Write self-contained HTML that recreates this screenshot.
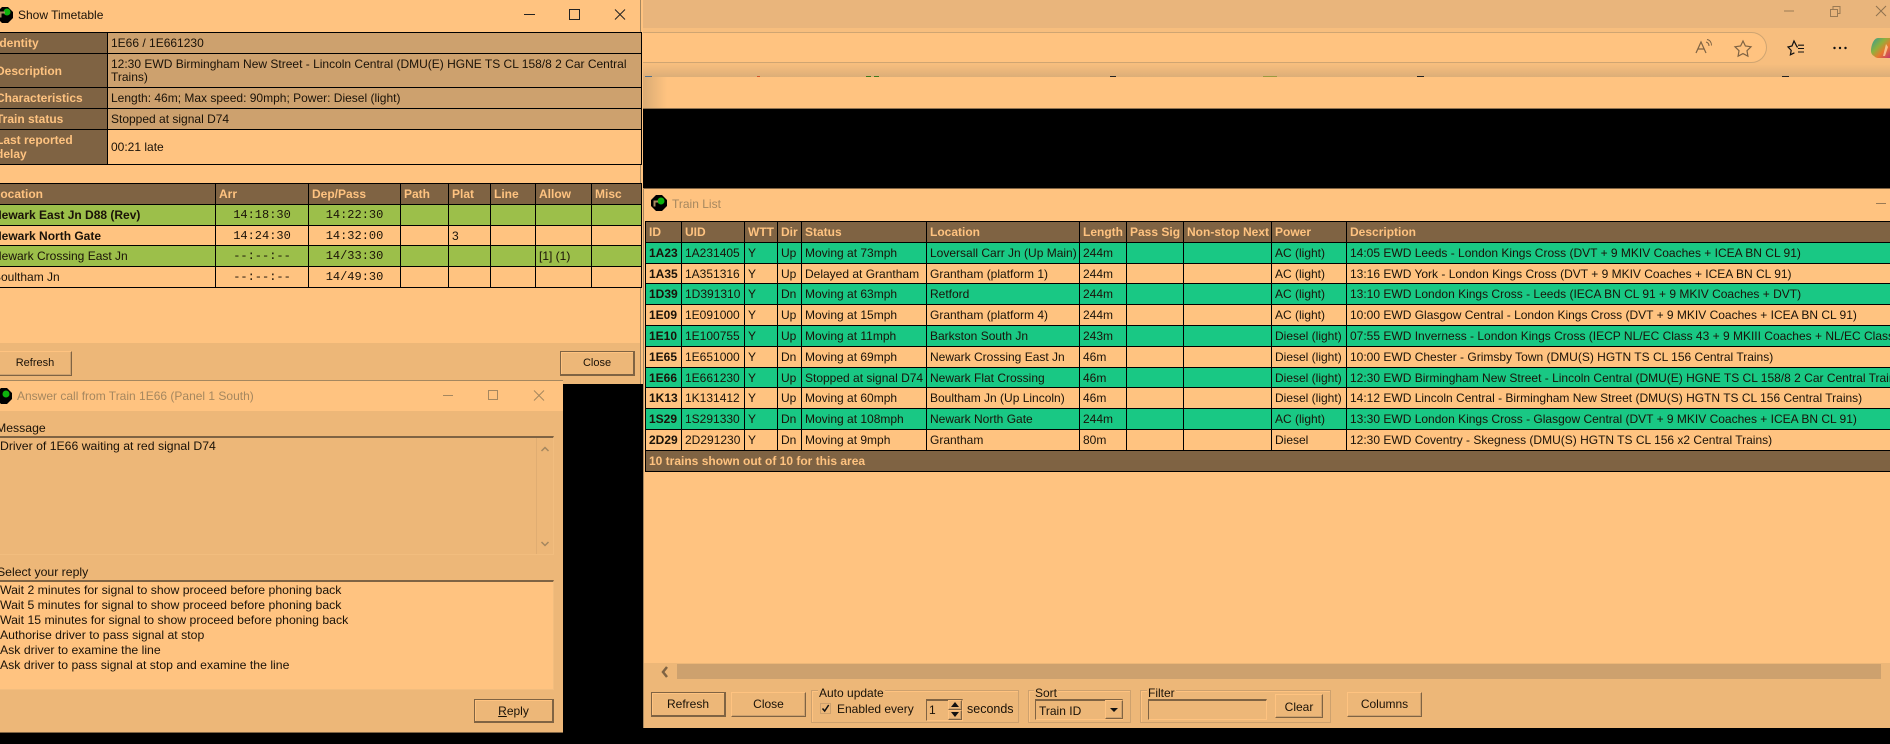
<!DOCTYPE html>
<html><head><meta charset="utf-8"><title>Train List</title>
<style>
html,body{margin:0;padding:0;background:#000;width:1890px;height:744px;overflow:hidden}
body{position:relative;font:12px/14px "Liberation Sans",Arial,sans-serif;color:#1a1208}
.a{position:absolute}
.t{position:absolute;white-space:nowrap;line-height:14px}
table{position:absolute;border-collapse:collapse;table-layout:fixed;font-size:12px;line-height:14px}
td,th{border:1px solid #000;padding:0 0 0 3px;white-space:nowrap;overflow:hidden;text-align:left;font-weight:normal;vertical-align:middle}
th,.h td{background:#7f6343;color:#ffc380;font-weight:bold}
.g td{background:#19c884}
.o td{background:#ffc380}
.lg td{background:#9cbf4a}
b{font-weight:bold}
.m{font-family:"Liberation Mono",monospace;text-align:center;padding:0}
.wrap{white-space:normal}
.btn{position:absolute;background:#edb778;box-sizing:border-box;border:1px solid;border-color:#ffc380 #7f6343 #7f6343 #ffc380;box-shadow:inset -1px -1px 0 #cda16e;text-align:center;color:#1a1208}
.def{border:2px solid #7f6343;border-top-width:1px;border-left-width:1px;box-shadow:inset 1px 1px 0 #ffc380}
.grp{position:absolute;box-sizing:border-box;border:1px solid #cda16e;box-shadow:1px 1px 0 #ffc380 inset}
.sunk{position:absolute;box-sizing:border-box;border:1px solid;border-color:#7f6343 #ffc380 #ffc380 #7f6343;border-top-width:2px;border-left-width:1px}
svg{position:absolute;overflow:visible}
.dlg .t{font-size:12.25px}
</style></head><body>

<!-- browser behind -->
<div class="a" style="left:643px;top:0;width:1247px;height:28px;background:#e9b57c"></div>
<div class="a" style="left:643px;top:28px;width:1247px;height:49px;background:linear-gradient(#f7be7e 0,#f7be7e 74%,#dcae78 100%)"></div>
<div class="a" style="left:643px;top:32px;width:1124px;height:31px;box-sizing:border-box;background:#ffc380;border:1px solid #cfa572;border-left:0;border-radius:0 16px 16px 0"></div>
<div class="a" style="left:643px;top:77px;width:1247px;height:31px;background:#ffc380"></div>
<div class="a" style="left:643px;top:77px;width:24px;height:31px;background:linear-gradient(90deg,#d9ab74,#ffc380)"></div>
<div class="a" style="left:643px;top:108px;width:1247px;height:1px;background:#8f7250"></div>
<div class="a" style="left:645px;top:76px;width:7px;height:1px;background:#53708a"></div>
<div class="a" style="left:757px;top:76px;width:3px;height:1px;background:#d4552a"></div>
<div class="a" style="left:866px;top:76px;width:5px;height:1px;background:#3f7a1e"></div>
<div class="a" style="left:874px;top:76px;width:5px;height:1px;background:#3f7a1e"></div>
<div class="a" style="left:1110px;top:76px;width:6px;height:1px;background:#222"></div>
<div class="a" style="left:1263px;top:76px;width:14px;height:1px;background:#9a9a40"></div>
<div class="a" style="left:1417px;top:76px;width:7px;height:1px;background:#222"></div>
<div class="a" style="left:1782px;top:76px;width:7px;height:1px;background:#222"></div>

<svg style="left:0;top:0" width="1890" height="80">
<path d="M1784 11h10" stroke="#9a7a54" stroke-width="1" fill="none"/>
<path d="M1830.500 9.500h7v7h-7zM1833 9V6.500h7v7h-2.500" stroke="#9a7a54" stroke-width="1" fill="none"/>
<path d="M1876 6l10 10M1886 6l-10 10" stroke="#8f7250" stroke-width="1" fill="none"/>
<path d="M1696 53l5-11 5 11M1698 49h6" stroke="#7f6343" stroke-width="1.200" fill="none"/>
<path d="M1706 42c2 .5 3 2 3 4M1707 39.500c3 .5 4.500 3 4.500 6" stroke="#7f6343" stroke-width="1" fill="none"/>
<path d="M1743 41l2.400 5 5.600.8-4 3.900.9 5.500-4.900-2.600-4.900 2.600.9-5.500-4-3.900 5.600-.8z" stroke="#7f6343" stroke-width="1.200" fill="none"/>
<path d="M1798 47l-1-.2L1794 41l-2 5-4 1 3.200 3.400-.8 4.400 4-2" stroke="#111" stroke-width="1.200" fill="none"/>
<path d="M1798 45.200h6M1798 48.500h6M1798 52h6" stroke="#111" stroke-width="1.100" fill="none"/>
<circle cx="1834.500" cy="48" r="1.200" fill="#111"/><circle cx="1840" cy="48" r="1.200" fill="#111"/><circle cx="1845.500" cy="48" r="1.200" fill="#111"/>
<defs><linearGradient id="cp" x1="0" y1="0" x2="1" y2="1"><stop offset="0" stop-color="#2f9a9a"/><stop offset=".4" stop-color="#8fb03c"/><stop offset=".65" stop-color="#e8792c"/><stop offset="1" stop-color="#c2366e"/></linearGradient></defs>
<path d="M1878 38h12v20h-11c-3 0-4-1-5-2-2-1-3-3-3-5 0-6 3-13 7-13z" fill="url(#cp)"/>
<path d="M1886 44l-3 12h2l3-9z" fill="#ffd9a8" opacity=".75"/>
</svg>

<!-- Train List window -->
<div class="a" style="left:643px;top:188px;width:1247px;height:540px;background:#ffc380"></div>
<div class="a" style="left:643px;top:188px;width:1247px;height:1px;background:#7f6343"></div>
<div class="a" style="left:643px;top:188px;width:1px;height:540px;background:#a5875f"></div>
<svg style="left:651px;top:195px" width="16" height="16">
<path d="M5 0h6l5 5v6l-5 5H5L0 11V5z" fill="#000"/><circle cx="10" cy="6" r="3.500" fill="#0db30d"/>
<path d="M2.500 6.500H7M3.500 6.500v5" stroke="#a88a60" stroke-width="2" fill="none"/></svg>
<div class="t" style="left:672px;top:197px;color:#a5875f">Train List</div>
<div class="a" style="left:1876px;top:203px;width:10px;height:1px;background:#9a7a54"></div>

<table style="left:645px;top:221px;width:1260px">
<colgroup><col style="width:36px"><col style="width:63px"><col style="width:33px"><col style="width:24px"><col style="width:125px"><col style="width:153px"><col style="width:47px"><col style="width:57px"><col style="width:88px"><col style="width:75px"><col style="width:559px"></colgroup>
<tr class="h" style="height:21px"><td>ID</td><td>UID</td><td>WTT</td><td>Dir</td><td>Status</td><td>Location</td><td>Length</td><td>Pass Sig</td><td style="padding-left:3px">Non-stop Next</td><td>Power</td><td>Description</td></tr>
<tr class="g" style="height:21px"><td><b>1A23</b></td><td>1A231405</td><td>Y</td><td>Up</td><td>Moving at 73mph</td><td>Loversall Carr Jn (Up Main)</td><td>244m</td><td></td><td></td><td>AC (light)</td><td>14:05 EWD Leeds - London Kings Cross (DVT + 9 MKIV Coaches + ICEA BN CL 91)</td></tr>
<tr class="o" style="height:20px"><td><b>1A35</b></td><td>1A351316</td><td>Y</td><td>Up</td><td>Delayed at Grantham</td><td>Grantham (platform 1)</td><td>244m</td><td></td><td></td><td>AC (light)</td><td>13:16 EWD York - London Kings Cross (DVT + 9 MKIV Coaches + ICEA BN CL 91)</td></tr>
<tr class="g" style="height:21px"><td><b>1D39</b></td><td>1D391310</td><td>Y</td><td>Dn</td><td>Moving at 63mph</td><td>Retford</td><td>244m</td><td></td><td></td><td>AC (light)</td><td>13:10 EWD London Kings Cross - Leeds (IECA BN CL 91 + 9 MKIV Coaches + DVT)</td></tr>
<tr class="o" style="height:21px"><td><b>1E09</b></td><td>1E091000</td><td>Y</td><td>Up</td><td>Moving at 15mph</td><td>Grantham (platform 4)</td><td>244m</td><td></td><td></td><td>AC (light)</td><td>10:00 EWD Glasgow Central - London Kings Cross (DVT + 9 MKIV Coaches + ICEA BN CL 91)</td></tr>
<tr class="g" style="height:21px"><td><b>1E10</b></td><td>1E100755</td><td>Y</td><td>Up</td><td>Moving at 11mph</td><td>Barkston South Jn</td><td>243m</td><td></td><td></td><td>Diesel (light)</td><td>07:55 EWD Inverness - London Kings Cross (IECP NL/EC Class 43 + 9 MKIII Coaches + NL/EC Class 43)</td></tr>
<tr class="o" style="height:21px"><td><b>1E65</b></td><td>1E651000</td><td>Y</td><td>Dn</td><td>Moving at 69mph</td><td>Newark Crossing East Jn</td><td>46m</td><td></td><td></td><td>Diesel (light)</td><td>10:00 EWD Chester - Grimsby Town (DMU(S) HGTN TS CL 156 Central Trains)</td></tr>
<tr class="g" style="height:20px"><td><b>1E66</b></td><td>1E661230</td><td>Y</td><td>Up</td><td>Stopped at signal D74</td><td>Newark Flat Crossing</td><td>46m</td><td></td><td></td><td>Diesel (light)</td><td>12:30 EWD Birmingham New Street - Lincoln Central (DMU(E) HGNE TS CL 158/8 2 Car Central Trains)</td></tr>
<tr class="o" style="height:21px"><td><b>1K13</b></td><td>1K131412</td><td>Y</td><td>Up</td><td>Moving at 60mph</td><td>Boultham Jn (Up Lincoln)</td><td>46m</td><td></td><td></td><td>Diesel (light)</td><td>14:12 EWD Lincoln Central - Birmingham New Street (DMU(S) HGTN TS CL 156 Central Trains)</td></tr>
<tr class="g" style="height:21px"><td><b>1S29</b></td><td>1S291330</td><td>Y</td><td>Dn</td><td>Moving at 108mph</td><td>Newark North Gate</td><td>244m</td><td></td><td></td><td>AC (light)</td><td>13:30 EWD London Kings Cross - Glasgow Central (DVT + 9 MKIV Coaches + ICEA BN CL 91)</td></tr>
<tr class="o" style="height:21px"><td><b>2D29</b></td><td>2D291230</td><td>Y</td><td>Dn</td><td>Moving at 9mph</td><td>Grantham</td><td>80m</td><td></td><td></td><td>Diesel</td><td>12:30 EWD Coventry - Skegness (DMU(S) HGTN TS CL 156 x2 Central Trains)</td></tr>
<tr class="h" style="height:21px"><td colspan="11">10 trains shown out of 10 for this area</td></tr>
</table>

<!-- train list bottom -->
<div class="a" style="left:644px;top:663px;width:1246px;height:65px;background:#edb778"></div>
<div class="a" style="left:677px;top:664px;width:1204px;height:15px;background:#cda16e"></div>
<svg style="left:660px;top:665px" width="10" height="14"><path d="M7 2L3 7l4 5" stroke="#7f6343" stroke-width="2.500" fill="none"/></svg>
<div class="btn def" style="left:651px;top:692px;width:75px;height:25px;line-height:23px">Refresh</div>
<div class="btn" style="left:731px;top:692px;width:75px;height:25px;line-height:23px">Close</div>

<div class="grp" style="left:811px;top:690px;width:208px;height:33px"></div>
<div class="t" style="left:818px;top:686px;background:#edb778;padding:0 1px">Auto update</div>
<div class="a" style="left:820px;top:703px;width:11px;height:11px;box-sizing:border-box;border:1px solid #cda16e;background:#edb778"></div>
<svg style="left:820px;top:703px" width="11" height="11"><path d="M2.500 5.500l2.200 2.500 4-6" stroke="#111" stroke-width="1.500" fill="none"/></svg>
<div class="t" style="left:837px;top:702px">Enabled every</div>
<div class="sunk" style="left:926px;top:699px;width:37px;height:22px;background:#edb778"></div>
<div class="t" style="left:929px;top:703px">1</div>
<div class="btn" style="left:948px;top:700px;width:14px;height:10px"></div>
<div class="btn" style="left:948px;top:710px;width:14px;height:10px"></div>
<svg style="left:948px;top:700px" width="14" height="20"><path d="M7 2l4 5H3zM7 17l4-5H3z" fill="#111"/></svg>
<div class="t" style="left:967px;top:702px;font-size:12.5px">seconds</div>

<div class="grp" style="left:1028px;top:690px;width:103px;height:33px"></div>
<div class="t" style="left:1034px;top:686px;background:#edb778;padding:0 1px">Sort</div>
<div class="sunk" style="left:1035px;top:699px;width:88px;height:21px;background:#edb778"></div>
<div class="t" style="left:1039px;top:704px">Train ID</div>
<div class="btn" style="left:1105px;top:700px;width:18px;height:19px"></div>
<svg style="left:1105px;top:700px" width="18" height="19"><path d="M5 8h8l-4 4z" fill="#111"/></svg>

<div class="grp" style="left:1140px;top:690px;width:191px;height:33px"></div>
<div class="t" style="left:1147px;top:686px;background:#edb778;padding:0 1px">Filter</div>
<div class="sunk" style="left:1148px;top:699px;width:119px;height:21px;background:#edb778"></div>
<div class="btn" style="left:1275px;top:694px;width:48px;height:24px;line-height:24px">Clear</div>
<div class="btn" style="left:1347px;top:692px;width:75px;height:25px;line-height:23px">Columns</div>

<!-- Show Timetable window -->
<div class="a" style="left:0;top:0;width:643px;height:384px;background:#ffc380;overflow:hidden">
 <div class="a" style="left:640px;top:0;width:1px;height:384px;background:#a5875f"></div>
 <svg style="left:-3px;top:7px" width="16" height="16"><path d="M5 0h6l5 5v6l-5 5H5L0 11V5z" fill="#000"/><circle cx="10" cy="5" r="3.500" fill="#0db30d"/><path d="M2.500 5.500H8M3.500 5.500v5" stroke="#a88a60" stroke-width="2" fill="none"/></svg>
 <div class="t" style="left:18px;top:8px">Show Timetable</div>
 <svg style="left:0;top:0" width="643" height="32"><path d="M524 14.500h11" stroke="#222" fill="none"/><path d="M569.500 9.500h10v10h-10z" stroke="#222" fill="none"/><path d="M615 9.500l10 10M625 9.500l-10 10" stroke="#222" fill="none"/></svg>

 <table style="left:-8px;top:32px;width:649px">
 <colgroup><col style="width:115px"><col style="width:534px"></colgroup>
 <tr style="height:21px"><th>Identity</th><td style="background:#cda16e">1E66 / 1E661230</td></tr>
 <tr style="height:34px"><th>Description</th><td class="wrap" style="background:#cda16e;line-height:13px">12:30 EWD Birmingham New Street - Lincoln Central (DMU(E) HGNE TS CL 158/8 2 Car Central Trains)</td></tr>
 <tr style="height:21px"><th>Characteristics</th><td style="background:#cda16e">Length: 46m; Max speed: 90mph; Power: Diesel (light)</td></tr>
 <tr style="height:21px"><th>Train status</th><td style="background:#cda16e">Stopped at signal D74</td></tr>
 <tr style="height:35px"><th>Last reported<br>delay</th><td style="background:#ffc380">00:21 late</td></tr>
 </table>

 <table style="left:-11px;top:183px;width:652px">
 <colgroup><col style="width:226px"><col style="width:93px"><col style="width:92px"><col style="width:48px"><col style="width:42px"><col style="width:45px"><col style="width:56px"><col style="width:50px"></colgroup>
 <tr class="h" style="height:21px"><td>Location</td><td>Arr</td><td>Dep/Pass</td><td>Path</td><td>Plat</td><td>Line</td><td>Allow</td><td>Misc</td></tr>
 <tr class="lg" style="height:21px"><td><b>Newark East Jn D88 (Rev)</b></td><td class="m">14:18:30</td><td class="m">14:22:30</td><td></td><td></td><td></td><td></td><td></td></tr>
 <tr class="o" style="height:20px"><td><b>Newark North Gate</b></td><td class="m">14:24:30</td><td class="m">14:32:00</td><td></td><td>3</td><td></td><td></td><td></td></tr>
 <tr class="lg" style="height:21px"><td>Newark Crossing East Jn</td><td class="m">--:--:--</td><td class="m">14/33:30</td><td></td><td></td><td></td><td>[1] (1)</td><td></td></tr>
 <tr class="o" style="height:21px"><td>Boultham Jn</td><td class="m">--:--:--</td><td class="m">14/49:30</td><td></td><td></td><td></td><td></td><td></td></tr>
 </table>

 <div class="a" style="left:0;top:343px;width:640px;height:41px;background:#edb778"></div>
 <div class="btn" style="left:-10px;top:351px;width:82px;height:25px;line-height:23px;padding-left:8px;font-size:11px">Refresh</div>
 <div class="btn def" style="left:560px;top:351px;width:75px;height:25px;line-height:23px;font-size:11px">Close</div>
</div>
<div class="a" style="left:0;top:384px;width:643px;height:1px;background:#000"></div>

<!-- Answer call dialog -->
<div class="a dlg" style="left:0;top:380px;width:563px;height:352px;background:#edb778;overflow:hidden;box-shadow:0 1px 0 #7f6343">
 <div class="a" style="left:0;top:0;width:563px;height:31px;background:#ffc380"></div>
 <div class="a" style="left:0;top:0;width:563px;height:1px;background:#a5875f"></div>
 <svg style="left:-4px;top:8px" width="16" height="16"><path d="M5 0h6l5 5v6l-5 5H5L0 11V5z" fill="#000"/><circle cx="10" cy="6" r="3.500" fill="#0db30d"/></svg>
 <div class="t" style="left:17px;top:9px;color:#a5875f;font-size:12px">Answer call from Train 1E66 (Panel 1 South)</div>
 <svg style="left:0;top:0" width="563" height="31"><path d="M443 15.500h10" stroke="#a5875f" fill="none"/><path d="M488.500 10.500h9v9h-9z" stroke="#a5875f" fill="none"/><path d="M534 10.500l10 10M544 10.500l-10 10" stroke="#a5875f" fill="none"/></svg>
 <div class="t" style="left:-4px;top:41px">Message</div>
 <div class="a" style="left:0;top:56px;width:554px;height:119px;box-sizing:border-box;border-top:2px solid #7f6343;border-right:1px solid #f2bd7e;border-bottom:1px solid #f2bd7e"></div>
 <div class="t" style="left:0;top:59px">Driver of 1E66 waiting at red signal D74</div>
 <div class="a" style="left:536px;top:58px;width:1px;height:116px;background:#e0ad72"></div>
 <svg style="left:540px;top:66px" width="10" height="100"><path d="M1.500 5L5 1.500 8.500 5" stroke="#a5875f" stroke-width="1.500" fill="none"/><path d="M1.500 96L5 99.500 8.500 96" stroke="#a5875f" stroke-width="1.500" fill="none"/></svg>
 <div class="t" style="left:-3px;top:185px">Select your reply</div>
 <div class="a" style="left:0;top:200px;width:554px;height:110px;box-sizing:border-box;background:#ffc380;border-top:2px solid #7f6343;border-right:1px solid #f2bd7e;border-bottom:1px solid #f2bd7e"></div>
 <div class="t" style="left:0;top:203px">Wait 2 minutes for signal to show proceed before phoning back</div>
 <div class="t" style="left:0;top:218px">Wait 5 minutes for signal to show proceed before phoning back</div>
 <div class="t" style="left:0;top:233px">Wait 15 minutes for signal to show proceed before phoning back</div>
 <div class="t" style="left:0;top:248px">Authorise driver to pass signal at stop</div>
 <div class="t" style="left:0;top:263px">Ask driver to examine the line</div>
 <div class="t" style="left:0;top:278px">Ask driver to pass signal at stop and examine the line</div>
 <div class="btn def" style="left:474px;top:319px;width:80px;height:24px;line-height:23px"><u>R</u>eply</div>
</div>
</body></html>
